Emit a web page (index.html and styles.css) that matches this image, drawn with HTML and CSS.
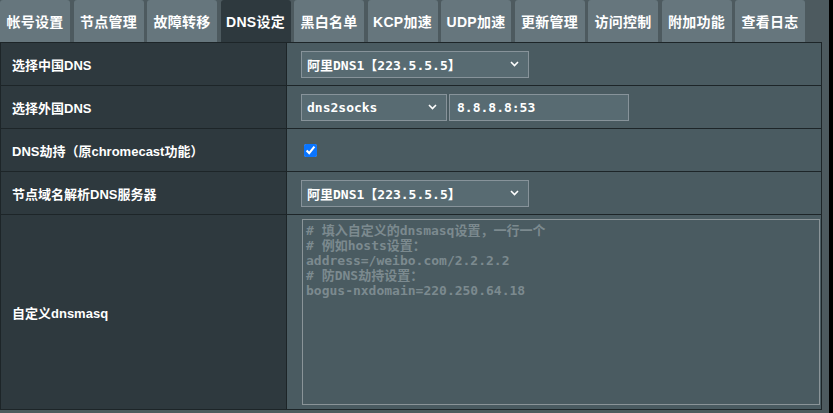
FILE: index.html
```html
<!DOCTYPE html>
<html lang="zh">
<head>
<meta charset="utf-8">
<title>DNS设定</title>
<link rel="stylesheet" href="styles.css">
</head>
<body>
<div class="page">
  <nav class="tabs">
    <div class="tab">帐号设置</div>
    <div class="tab">节点管理</div>
    <div class="tab">故障转移</div>
    <div class="tab active">DNS设定</div>
    <div class="tab">黑白名单</div>
    <div class="tab">KCP加速</div>
    <div class="tab">UDP加速</div>
    <div class="tab">更新管理</div>
    <div class="tab">访问控制</div>
    <div class="tab">附加功能</div>
    <div class="tab">查看日志</div>
  </nav>
  <div class="table">
    <div class="row">
      <div class="label">选择中国DNS</div>
      <div class="cell">
        <div class="select w228"><span>阿里DNS1【223.5.5.5】</span><svg class="chev" width="9" height="6" viewBox="0 0 9 6"><path d="M1 1 L4.5 4.5 L8 1" fill="none" stroke="#fff" stroke-width="1.6"/></svg></div>
      </div>
    </div>
    <div class="row">
      <div class="label">选择外国DNS</div>
      <div class="cell">
        <div class="select w146"><span>dns2socks</span><svg class="chev" width="9" height="6" viewBox="0 0 9 6"><path d="M1 1 L4.5 4.5 L8 1" fill="none" stroke="#fff" stroke-width="1.6"/></svg></div>
        <div class="input">8.8.8.8:53</div>
      </div>
    </div>
    <div class="row">
      <div class="label">DNS劫持（原chromecast功能）</div>
      <div class="cell">
        <input type="checkbox" class="check" checked>
      </div>
    </div>
    <div class="row">
      <div class="label">节点域名解析DNS服务器</div>
      <div class="cell">
        <div class="select w228"><span>阿里DNS1【223.5.5.5】</span><svg class="chev" width="9" height="6" viewBox="0 0 9 6"><path d="M1 1 L4.5 4.5 L8 1" fill="none" stroke="#fff" stroke-width="1.6"/></svg></div>
      </div>
    </div>
    <div class="row tall">
      <div class="label">自定义dnsmasq</div>
      <div class="cell top">
        <textarea class="area" placeholder="# 填入自定义的dnsmasq设置，一行一个
# 例如hosts设置：
address=/weibo.com/2.2.2.2
# 防DNS劫持设置：
bogus-nxdomain=220.250.64.18"></textarea>
      </div>
    </div>
  </div>
</div>
</body>
</html>
```

FILE: styles.css
```css
html, body {
  margin: 0;
  padding: 0;
  background: #000;
}
.page {
  width: 829px;
  height: 413px;
  background: #4d5a5f;
  overflow: hidden;
  font-family: "Liberation Sans", "Noto Sans CJK SC", sans-serif;
}
.tabs {
  display: flex;
  gap: 3.5px;
  height: 42px;
}
.tab {
  width: 70px;
  flex: none;
  height: 42px;
  background: #66767d;
  border-radius: 3px 3px 0 0;
  color: #fff;
  font-weight: bold;
  font-size: 14px;
  display: flex;
  align-items: center;
  justify-content: center;
  white-space: nowrap;
  letter-spacing: 0.3px;
}
.tab.active {
  background: #2e393e;
}
.table {
  width: 820px;
  border: 1px solid #1d2528;
  border-bottom: none;
}
.row {
  display: flex;
  height: 42px;
  border-bottom: 1px solid #1d2528;
}
.row.tall {
  height: 194px;
}
.label {
  width: 286px;
  flex: none;
  box-sizing: border-box;
  background: #2e393e;
  border-right: 1px solid #1d2528;
  color: #fff;
  font-weight: bold;
  font-size: 13px;
  display: flex;
  align-items: center;
  padding-left: 11px;
}
.cell {
  flex: 1;
  background: #4a5b61;
  display: flex;
  align-items: center;
  padding-left: 14px;
  gap: 2px;
}
.cell.top {
  align-items: flex-start;
  padding-top: 4px;
  padding-left: 15px;
  padding-right: 1px;
}
.select, .input {
  height: 27px;
  box-sizing: border-box;
  border: 1px solid #87939a;
  background: #586b72;
  color: #fff;
  font-family: "DejaVu Sans Mono", "Noto Sans CJK SC", monospace;
  font-weight: bold;
  font-size: 13px;
  display: flex;
  align-items: center;
  padding-left: 5px;
  white-space: nowrap;
}
.select {
  justify-content: space-between;
  padding-right: 9px;
}
.w228 { width: 228px; }
.w146 { width: 146px; }
.input { width: 180px; padding-left: 7px; }
.chev { display: block; }
.check {
  margin: 0 0 0 3px;
  width: 13px;
  height: 13px;
  accent-color: #0a75ff;
}
.area {
  width: 100%;
  height: 186px;
  box-sizing: border-box;
  margin: 0;
  border: 1px solid #8a9498;
  background: #4a5b61;
  resize: none;
  padding: 3px 3px;
  font-family: "DejaVu Sans Mono", "Noto Sans CJK SC", monospace;
  font-weight: bold;
  font-size: 13px;
  line-height: 15px;
  color: #fff;
  outline: none;
}
.area::placeholder {
  color: #7c8a8f;
  opacity: 1;
}
```
